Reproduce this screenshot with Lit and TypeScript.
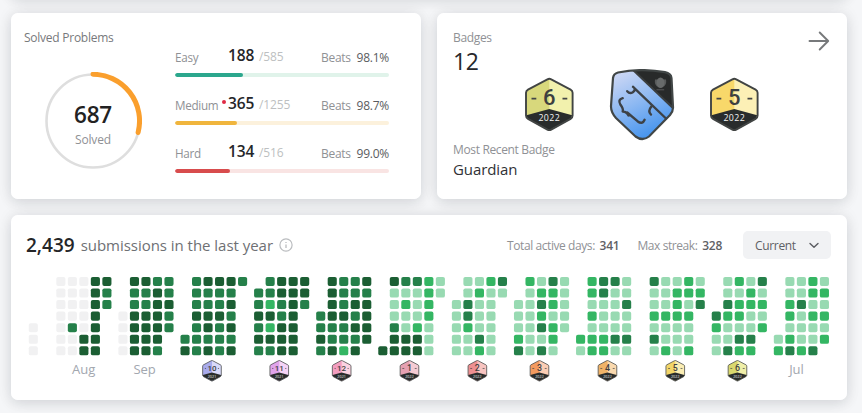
import { LitElement, html, svg, css } from "lit";
import { customElement, property } from "lit/decorators.js";

const LEVELS = ["#f1f1f2", "#98dab2", "#34b663", "#25804a", "#1b5e33"];
const PITCH = 11.51;
const GROUP = 16.05;

interface Month { cols: string[]; label?: string; at?: number; badge?: string; year?: string; a?: string; b?: string; }

// Each column string runs Sunday to Saturday; digits are activity levels.
const MONTHS: Month[] = [
  { cols: ["....000", "......."] },
  { cols: ["0000000", "0000300", "0000044", "4444444", "433...."], label: "Aug", at: 83.7 },
  { cols: ["...0000", "4334444", "4334444", "3444443", "33433.."], label: "Sep", at: 144.6 },
  { cols: [".....34", "3334333", "4334434", "4334333", "4343434", "3......"], badge: "10", year: "2021", at: 212, a: "#a9abec", b: "#d9dafa" },
  { cols: [".334343", "3324243", "4433444", "4444444", "443...."], badge: "11", year: "2021", at: 279.3, a: "#e0a3ea", b: "#f5d3f6" },
  { cols: ["...3343", "4444334", "3334332", "3343434", "434444."], badge: "12", year: "2021", at: 341.7, a: "#f39dbf", b: "#fbd3e1" },
  { cols: ["......4", "4111344", "3121144", "3111244", "2222111", "11....."], badge: "1", year: "2022", at: 409.5, a: "#e5a0b1", b: "#f4cbd3" },
  { cols: ["..11111", "1133211", "1211132", "2111111", "31....."], badge: "2", year: "2022", at: 477.4, a: "#ed8f91", b: "#f8c4c0" },
  { cols: ["..11123", "2111111", "1232313", "3221221", "11111.."], badge: "3", year: "2022", at: 539.5, a: "#f39a5f", b: "#fbcdb4" },
  { cols: [".....21", "2212122", "3311122", "3111131", "1131131", "......."], badge: "4", year: "2022", at: 607.5, a: "#f0b368", b: "#fad9ae" },
  { cols: ["3112131", "1112112", "1222111", "2212112", "123...."], badge: "5", year: "2022", at: 675.3, a: "#f3d668", b: "#fbeeb4" },
  { cols: ["...3211", "1132113", "2122132", "1221132", "31212.."], badge: "6", year: "2022", at: 737.5, a: "#d9d86e", b: "#f0efa8" },
  { cols: [".....12", "1122123", "1131112", "2212113", "121212."], label: "Jul", at: 796.5 },
];

const hex = (num: string, year: string, a: string, b: string) => svg`
  <path d="M22.4 2.3Q24.3 1.3 26.2 2.3L45.6 12.6Q47.6 13.7 47.6 15.8V38.5Q47.6 40.8 45.6 41.9L26.2 52.6Q24.3 53.7 22.4 52.6L3 41.9Q1 40.8 1 38.5V15.8Q1 13.7 3 12.6Z" fill="${b}"/>
  <path d="M24.3 2L3 13.2Q1.6 14 1.6 16V38H24.3Z" fill="${a}"/>
  <path d="M1.4 38.3L24.3 32L47.2 38.3L46 41.6L24.3 53.2L2.6 41.6Z" fill="#292c2c"/>
  <path d="M22.4 2.3Q24.3 1.3 26.2 2.3L45.6 12.6Q47.6 13.7 47.6 15.8V38.5Q47.6 40.8 45.6 41.9L26.2 52.6Q24.3 53.7 22.4 52.6L3 41.9Q1 40.8 1 38.5V15.8Q1 13.7 3 12.6Z" fill="none" stroke="#414443" stroke-width="1.9"/>
  <path d="${num.length > 1 ? "M6.5 21.7H9.5M39 21.7H42" : "M6.5 21.7H11.3M37.5 21.7H42.3"}" stroke="#454747" stroke-width="1.8"/>
  <text x="24.2" y="28.2" text-anchor="middle" font-family="Roboto, sans-serif" font-weight="500" font-size="${num.length > 1 ? 20 : 22}" fill="#3d3f40">${num}</text>
  <text x="24.3" y="44.4" text-anchor="middle" font-family="Open Sans, sans-serif" font-weight="500" font-size="8.8" letter-spacing=".4" fill="#f4f4f4">${year}</text>`;

@customElement("hex-badge")
class HexBadge extends LitElement {
  @property() num = "";
  @property() a = "";
  @property() b = "";
  static styles = css`:host{display:block;width:49px;height:55px} svg{display:block}`;
  render() {
    return html`<svg width="49" height="55" viewBox="0 0 49 55">${hex(this.num, "2022", this.a, this.b)}</svg>`;
  }
}

@customElement("app-root")
class AppRoot extends LitElement {
  static styles = css`
    :host { display: block; width: 862px; height: 413px; overflow: hidden; position: relative; background: #f5f6f8; font-family: "Open Sans", "Noto Sans", sans-serif; font-size: 12px; color: #8f9195; }
    * { box-sizing: border-box; }
    .page { display: flex; flex-direction: column; gap: 16px; width: 836px; margin-left: 11px; }
    .card { background: #fff; border-radius: 7px; position: relative; }
    .card::before { content: ""; position: absolute; inset: 0; z-index: -1; border-radius: 7px; box-shadow: 0 4px 13px rgba(20,30,40,.1), 0 0 16px rgba(20,30,40,.075); }
    .page { position: relative; z-index: 0; }
    .above { height: 20px; margin-top: -23px; }
    .row { display: grid; grid-template-columns: 410px 410px; gap: 16px; height: 186px; }
    .solved { display: flex; padding: 16px 32px 0 12px; }
    .left { width: 152px; line-height: 18px; }
    .title { color: #77797c; letter-spacing: -.25px; white-space: nowrap; padding-left: 1px; }
    .ring { position: relative; width: 98px; height: 98px; margin: 25px 0 0 21px; }
    .ring svg { display: block; }
    .count { position: absolute; inset: 29px 0 0; text-align: center; line-height: 28px; font-size: 22.5px; font-weight: 600; letter-spacing: -.2px; color: #222; }
    .count small { display: block; font-size: 12px; line-height: 20px; color: #8f9195; font-weight: 400; margin-top: 1px; letter-spacing: -.15px; }
    .stats { flex: 1; padding-top: 17px; }
    .stat { height: 48px; }
    .line { display: flex; align-items: baseline; height: 27px; line-height: 23px; white-space: nowrap; position: relative; top: -1px; margin-bottom: 0; }
    .name { width: 53px; font-size: 11.7px; letter-spacing: -.3px; position: relative; }
    .dot::after { content: ""; position: absolute; width: 4px; height: 4px; border-radius: 50%; background: #e02a44; left: 47px; top: 6px; }
    .num { font-size: 15.5px; font-weight: 600; color: #252629; width: 31px; letter-spacing: -.15px; position: relative; top: -1px; }
    .tot { color: #bdbfc1; flex: 1; font-size: 12px; position: relative; top: -1px; letter-spacing: -.1px; }
    .beats { font-size: 12px; letter-spacing: -.3px; }
    .beats b { font-weight: 500; color: #5a5c60; margin-left: 3px; letter-spacing: -.25px; }
    .bar { height: 4px; border-radius: 2px; overflow: hidden; }
    .bar i { display: block; height: 4px; border-radius: 2px; }
    .easy { background: #e0f3ea; } .easy i { background: #2ba78d; }
    .medium { background: #fcf1dc; } .medium i { background: #f0b53d; }
    .hard { background: #f9e4e3; } .hard i { background: #d84c4d; }
    .badges { display: flex; justify-content: space-between; padding: 16px 17px 0 16px; }
    .info { line-height: 18px; white-space: nowrap; letter-spacing: -.35px; }
    .big { font-size: 23px; line-height: 29px; color: #27282b; font-weight: 400; letter-spacing: -.5px; }
    .recent { margin-top: 65px; }
    .guard { font-size: 15px; line-height: 22px; color: #303135; letter-spacing: -.1px; position: relative; top: -1px; }
    .gallery { position: absolute; left: 88px; top: 56px; display: flex; gap: 35px; }
    .gallery hex-badge { margin-top: 8px; }
    .year { height: 185px; }
    .head { display: flex; align-items: center; height: 60px; padding: 0 16px 0 15px; white-space: nowrap; }
    .total { font-size: 19px; font-weight: 600; color: #252628; }
    .sub { font-size: 15px; color: #6e7074; margin-left: 6px; letter-spacing: -.03px; }
    .infoic { margin-left: 6px; }
    .right { margin-left: auto; display: flex; align-items: center; letter-spacing: -.42px; }
    .right b { font-weight: 600; color: #5f6165; margin-left: 2px; letter-spacing: -.25px; }
    .streak { margin-left: 18px; }
    .drop { width: 88px; height: 28px; margin-left: 21px; border-radius: 5px; background: #f1f2f4; display: flex; align-items: center; justify-content: space-between; padding: 0 12px; color: #5e6065; letter-spacing: -.33px; }
    .cal { display: block; }
  `;

  stat(name: string, num: number, tot: number, beats: string, cls: string, w: number) {
    return html`<div class="stat"><div class="line"><span class="name ${cls === "medium" ? "dot" : ""}">${name}</span><span class="num">${num}</span><span class="tot">/${tot}</span><span class="beats">Beats <b>${beats}</b></span></div><div class="bar ${cls}"><i style="width:${w}px"></i></div></div>`;
  }

  calendar() {
    let x = 22.3 - GROUP;
    const cells: unknown[] = [];
    for (const m of MONTHS) {
      x += GROUP;
      m.cols.forEach((c, i) => {
        if (i) x += PITCH;
        [...c].forEach((l, r) => {
          if (l !== ".") cells.push(svg`<rect x="${x - 4.55}" y="${6.4 + r * 11.56 - 4.5}" width="9.1" height="9.1" rx="1.9" fill="${LEVELS[+l]}"/>`);
        });
      });
      if (m.badge) cells.push(svg`<g transform="translate(${m.at! - 11 - 9.75} 84.8) scale(.4)">${hex(m.badge, m.year!, m.a!, m.b!)}</g>`);
      if (m.label) cells.push(svg`<text x="${m.at! - 11}" y="99" text-anchor="middle" font-size="13" fill="#a2a7af">${m.label}</text>`);
    }
    return html`<svg class="cal" width="836" height="120" viewBox="0 0 836 120">${cells}</svg>`;
  }

  render() {
    return html`<div class="page">
      <div class="card above"></div>
      <div class="row">
        <section class="card solved">
          <div class="left"><div class="title">Solved Problems</div>
            <div class="ring">
              <svg width="98" height="98" viewBox="0 0 98 98" fill="none"><circle cx="49" cy="49" r="46.5" stroke="#dedede" stroke-width="2.6"/><path d="M49 2.3A46.7 46.7 0 0 1 94.1 60.5" stroke="#fa9f2d" stroke-width="5" stroke-linecap="round"/></svg>
              <div class="count">687<small>Solved</small></div>
            </div>
          </div>
          <div class="stats">
            ${this.stat("Easy", 188, 585, "98.1%", "easy", 68)}
            ${this.stat("Medium", 365, 1255, "98.7%", "medium", 62)}
            ${this.stat("Hard", 134, 516, "99.0%", "hard", 55)}
          </div>
        </section>
        <section class="card badges">
          <div class="info"><div>Badges</div><div class="big">12</div><div class="recent">Most Recent Badge</div><div class="guard">Guardian</div></div>
          <svg width="22" height="24" viewBox="0 0 22 24" fill="none" stroke="#77797b" stroke-width="1.9" stroke-linecap="round" stroke-linejoin="round"><path d="M1.5 12H20M11.7 3.5L20.2 12L11.7 20.5"/></svg>
          <div class="gallery">
            <hex-badge num="6" a="#d8d87c" b="#f2f1ad"></hex-badge>
            <svg width="66" height="72" viewBox="0 0 66 72" fill="none">
              <defs><linearGradient id="blue" x1="8" y1="4" x2="40" y2="68" gradientUnits="userSpaceOnUse"><stop stop-color="#ced8f5"/><stop offset=".5" stop-color="#8cb8f2"/><stop offset="1" stop-color="#4594ee"/></linearGradient>
              <clipPath id="sh"><path d="M9 3.5Q32 -1.2 56 3.2Q62 4.5 62.5 9L64 38Q64.3 42 61 46L40 67.5Q33.5 72.5 26.5 67.5L7 49Q1.8 43 2 37L4 9Q4.6 4.6 9 3.5Z"/></clipPath></defs>
              <g clip-path="url(#sh)"><path d="M0 0H66V72H0Z" fill="url(#blue)"/><path d="M23 0H66V40Z" fill="#282a2a"/><path d="M23 0L67 42" stroke="#3b3e3e" stroke-width="2"/></g>
              <path d="M9 3.5Q32 -1.2 56 3.2Q62 4.5 62.5 9L64 38Q64.3 42 61 46L40 67.5Q33.5 72.5 26.5 67.5L7 49Q1.8 43 2 37L4 9Q4.6 4.6 9 3.5Z" stroke="#414646" stroke-width="2.2"/>
              <g stroke="#3d4247" stroke-width="2.4" stroke-linecap="round" stroke-linejoin="round"><path d="M24 17.8Q27.6 20.2 23.8 23.2Q20.8 25.2 18.2 22.2M25.6 19.4L57 49.5M42.7 37Q38.3 42.5 42 45.6M13.7 29.2Q8.4 30.5 11.5 35.8Q14.7 40 13.7 42.5Q18 42.8 19.5 46.5M18.2 43.5L28.5 52.2Q33.5 56 35.6 50.8"/></g>
              <g fill="#686b6b"><ellipse cx="51.5" cy="13.8" rx="4" ry="5.2"/><path d="M46 10.5H57Q58.2 16.5 53.5 18H49.5Q44.8 16.5 46 10.5Z" opacity=".75"/><path d="M47.5 20.8H55.2" stroke="#57595a"/></g>
            </svg>
            <hex-badge num="5" a="#f8d86a" b="#fcf0b6"></hex-badge>
          </div>
        </section>
      </div>
      <section class="card year">
        <div class="head"><span class="total">2,439</span><span class="sub">submissions in the last year</span>
          <svg class="infoic" width="14" height="14" viewBox="0 0 14 14" fill="none" stroke="#babcbf"><circle cx="7" cy="7" r="6.1" stroke-width="1.2"/><path d="M7 6.4V10M7 4V5.1" stroke-width="1.3"/></svg>
          <div class="right"><span>Total active days: <b>341</b></span><span class="streak">Max streak: <b>328</b></span>
            <div class="drop"><span>Current</span><svg width="10" height="7" viewBox="0 0 10 7" fill="none" stroke="#5b5d62" stroke-width="1.4" stroke-linecap="round" stroke-linejoin="round"><path d="M1 1.4L5 5.3L9 1.4"/></svg></div>
          </div>
        </div>
        ${this.calendar()}
      </section>
    </div>`;
  }
}
